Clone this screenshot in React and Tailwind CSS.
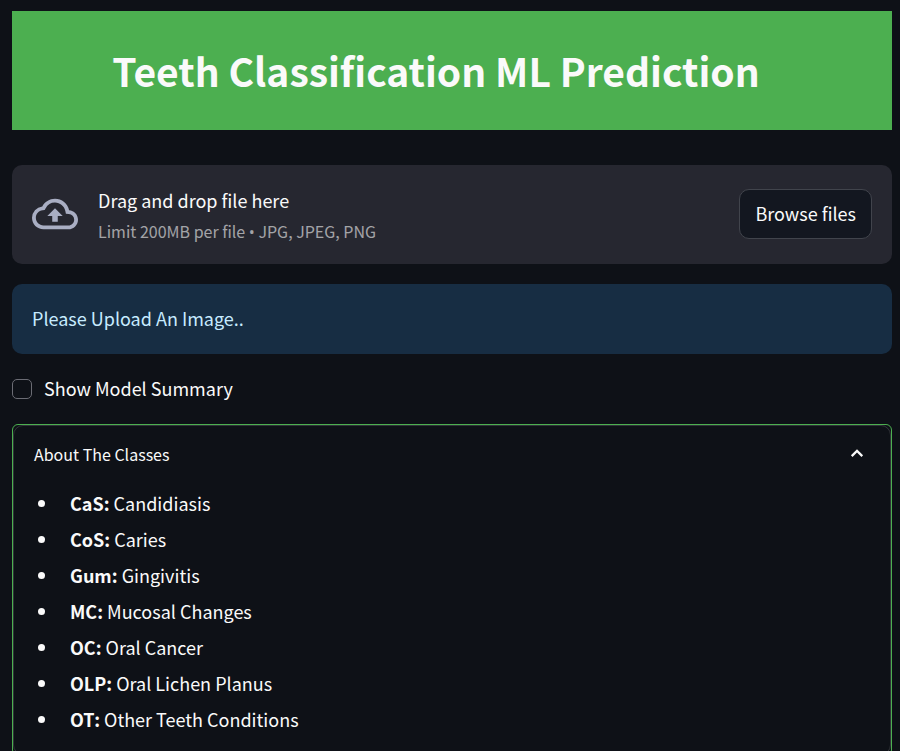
import { useState } from "react";

const classes = [
  ["CaS", "Candidiasis"],
  ["CoS", "Caries"],
  ["Gum", "Gingivitis"],
  ["MC", "Mucosal Changes"],
  ["OC", "Oral Cancer"],
  ["OLP", "Oral Lichen Planus"],
  ["OT", "Other Teeth Conditions"],
];

function Uploader() {
  return (
    <section className="mt-[35px] flex items-start rounded-[10px] bg-[#262730] px-5 py-6">
      <svg
        className="mr-5 h-[50px] w-[46px] shrink-0 text-[#a9aec3]"
        viewBox="0 0 24 24"
        fill="currentColor"
        aria-hidden="true"
      >
        <path d="M19.35 10.04A7.49 7.49 0 0012 4C9.11 4 6.6 5.64 5.35 8.04A5.994 5.994 0 000 14c0 3.31 2.69 6 6 6h13c2.76 0 5-2.24 5-5 0-2.64-2.05-4.78-4.65-4.96zM19 18H6c-2.21 0-4-1.79-4-4 0-2.05 1.53-3.76 3.56-3.97l1.07-.11.5-.95A5.469 5.469 0 0112 6c2.62 0 4.88 1.86 5.39 4.43l.3 1.5 1.53.11A2.98 2.98 0 0122 15c0 1.65-1.35 3-3 3zM8 13h2.55v3h2.9v-3H16l-4-4z" />
      </svg>
      <div className="flex grow flex-col gap-[11px]">
        <span className="text-[18px] leading-[22px]">Drag and drop file here</span>
        <small className="text-[16px] leading-[18px] text-[#fafafa]/60">
          Limit 200MB per file{" "}
          <span className="font-['Open_Sans'] leading-none">•</span> JPG, JPEG, PNG
        </small>
      </div>
      <button
        type="button"
        className="h-[50px] shrink-0 rounded-[10px] border border-[#41444c] bg-[#131720] px-[15px] pb-[2px] text-[18px]"
      >
        Browse files
      </button>
    </section>
  );
}

function ClassesPanel() {
  const [open, setOpen] = useState(true);
  return (
    <div className="mt-5 rounded-[6px] border border-[#4caf50]">
      <div className="rounded-[10px] border border-[#fafafa]/15">
        <button
          type="button"
          aria-expanded={open}
          onClick={() => setOpen(!open)}
          className="flex w-full items-center justify-between px-5 pt-[13px] pb-4 text-[16px] leading-[30px]"
        >
          About The Classes
          <svg
            className="mr-1 size-[18px]"
            viewBox="0 0 8 8"
            fill="currentColor"
            aria-hidden="true"
          >
            <path d="M4 1.9L1.3 4.6l.7.7 2-2 2 2 .7-.7z" />
          </svg>
        </button>
        {open && (
          <ul className="list-disc pt-[3px] pr-5 pb-[14px] pl-[45px] text-[18px] leading-[30px]">
            {classes.map(([code, name]) => (
              <li key={code} className="mb-[6px] pl-[11px]">
                <strong className="font-bold">{code}:</strong> {name}
              </li>
            ))}
          </ul>
        )}
      </div>
    </div>
  );
}

export default function App() {
  return (
    <main className="min-h-screen bg-[#0e1117] pt-[11px] pr-2 pb-5 pl-3 font-['Noto_Sans_CJK_SC','Open_Sans',sans-serif] text-[#fafafa]">
      <header className="bg-[#4caf50] py-8 pr-8">
        <h1 className="text-center text-[39px] leading-[55px] font-bold">
          Teeth Classification ML Prediction
        </h1>
      </header>
      <Uploader />
      <div
        role="status"
        className="mt-5 rounded-[10px] bg-[#172d43] px-5 pt-[19px] pb-[21px] text-[18px] leading-[30px] text-[#c7ebff]"
      >
        Please Upload An Image..
      </div>
      <label className="mt-5 flex items-center gap-3 text-[18px] leading-[28px]">
        <input
          type="checkbox"
          className="size-5 appearance-none rounded-[5px] border border-[#6b6c74] checked:bg-[#ff4b4b]"
        />
        <span className="pb-[2px]">Show Model Summary</span>
      </label>
      <ClassesPanel />
    </main>
  );
}
